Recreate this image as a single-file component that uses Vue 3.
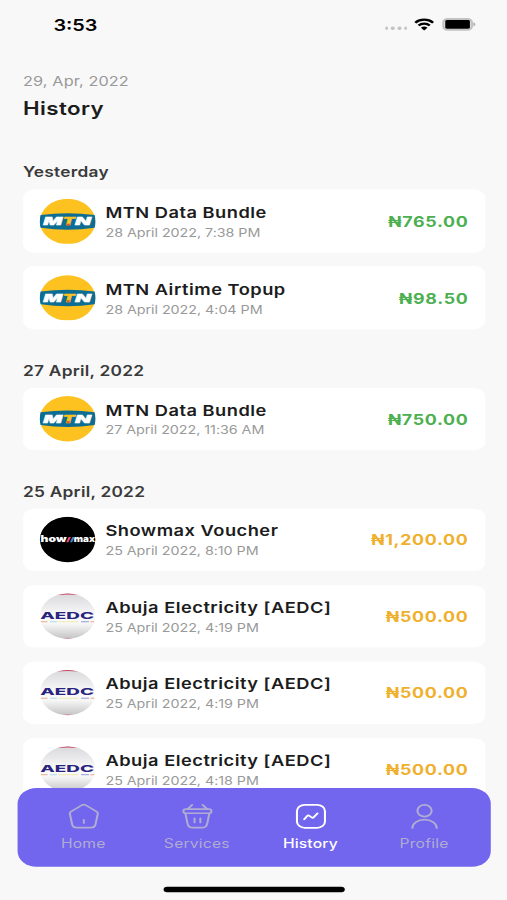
<script setup>
const groups = [
  {
    label: 'Yesterday',
    items: [
      { logo: 'mtn', title: 'MTN Data Bundle', date: '28 April 2022, 7:38 PM', amount: '₦765.00', tone: 'green' },
      { logo: 'mtn', title: 'MTN Airtime Topup', date: '28 April 2022, 4:04 PM', amount: '₦98.50', tone: 'green' },
    ],
  },
  {
    label: '27 April, 2022',
    items: [
      { logo: 'mtn', title: 'MTN Data Bundle', date: '27 April 2022, 11:36 AM', amount: '₦750.00', tone: 'green' },
    ],
  },
  {
    label: '25 April, 2022',
    items: [
      { logo: 'showmax', title: 'Showmax Voucher', date: '25 April 2022, 8:10 PM', amount: '₦1,200.00', tone: 'amber' },
      { logo: 'aedc', title: 'Abuja Electricity [AEDC]', date: '25 April 2022, 4:19 PM', amount: '₦500.00', tone: 'amber' },
      { logo: 'aedc', title: 'Abuja Electricity [AEDC]', date: '25 April 2022, 4:19 PM', amount: '₦500.00', tone: 'amber' },
      { logo: 'aedc', title: 'Abuja Electricity [AEDC]', date: '25 April 2022, 4:18 PM', amount: '₦500.00', tone: 'amber' },
    ],
  },
]
const tabs = ['Home', 'Services', 'History', 'Profile']
const active = 'History'
</script>

<template>
  <div class="viewport">
    <div class="screen">
      <header class="status">
        <span class="time">3:53</span>
        <div class="indicators">
          <span class="dots"><i v-for="n in 4" :key="n"></i></span>
          <svg class="wifi" viewBox="0 0 16 12">
            <path d="M1.2 4.4a9.7 9.7 0 0 1 13.6 0M3.7 7a6.2 6.2 0 0 1 8.6 0" fill="none" stroke="#000" stroke-width="2" />
            <path d="M5.5 9.1a3.6 3.6 0 0 1 5 0L8 11.8z" fill="#000" />
          </svg>
          <svg class="battery" viewBox="0 0 26 12">
            <rect x="1" y="1" width="21.8" height="10" rx="3.2" fill="none" stroke="#c2c2c2" stroke-width="1.9" />
            <rect x="2.4" y="2" width="19" height="8" rx="1.4" fill="#000" />
            <path d="M24 4.1q1.6.5 1.6 1.9T24 7.9z" fill="#b5b5b5" />
          </svg>
        </div>
      </header>

      <div class="heading">
        <p class="today">29, Apr, 2022</p>
        <h1>History</h1>
      </div>

      <main class="list">
        <section v-for="g in groups" :key="g.label" class="group">
          <h2>{{ g.label }}</h2>
          <article v-for="(t, i) in g.items" :key="i" class="card">
            <svg v-if="t.logo === 'mtn'" class="logo" viewBox="0 0 42 42">
              <circle cx="21" cy="21" r="20.7" fill="#fdc220" />
              <path d="M.8 15.2Q21 11.8 41.2 15.2Q42.3 21 41.2 26.8Q21 30.4.8 26.8Q-.3 21 .8 15.2z" fill="#0d6d92" />
              <g class="mtn-text">
                <text x="2.8" y="24.6" textLength="14.2" lengthAdjust="spacingAndGlyphs" fill="#fff">M</text>
                <text x="17.4" y="24.6" textLength="9" lengthAdjust="spacingAndGlyphs" fill="#fdc220" stroke="#fdc220">T</text>
                <text x="26.6" y="24.6" textLength="12" lengthAdjust="spacingAndGlyphs" fill="#fff">N</text>
              </g>
              <path d="M19.8 23.2h3.2l-1.5 2.5z" fill="#d8502c" />
            </svg>
            <svg v-else-if="t.logo === 'showmax'" class="logo round" viewBox="0 0 42 42">
              <circle cx="21" cy="21" r="20.7" fill="#000" />
              <g class="show-text" fill="#fff">
                <text x=".8" y="23.4" textLength="19.4" lengthAdjust="spacingAndGlyphs">how</text>
                <text x="25.6" y="23.4" textLength="15.8" lengthAdjust="spacingAndGlyphs">max</text>
              </g>
              <path d="M19.9 23.4l1.9-4.7h1.7l-1.9 4.7z" fill="#e8467c" />
              <path d="M22.7 23.4l1.9-4.7h1.7l-1.9 4.7z" fill="#4f7fc0" />
            </svg>
            <svg v-else class="logo round" viewBox="0 0 42 42">
              <defs>
                <linearGradient :id="'ball' + i" x1="0" y1="0" x2="0" y2="1">
                  <stop offset="0" stop-color="#d9d9db" />
                  <stop offset=".3" stop-color="#ececee" />
                  <stop offset=".5" stop-color="#fcfcfc" />
                  <stop offset=".68" stop-color="#f6f6f6" />
                  <stop offset="1" stop-color="#c4c4c6" />
                </linearGradient>
              </defs>
              <circle cx="21" cy="21" r="20.7" :fill="'url(#ball' + i + ')'" />
              <path d="M13 1.9Q21-1 29 1.9Q21 1 13 1.9z" fill="#c9415b" />
              <path d="M17 41.2Q21 40.4 25 41.2L21 41.8z" fill="#d68d98" />
              <text class="aedc-text" x=".5" y="23.7" textLength="40.3" lengthAdjust="spacingAndGlyphs" fill="#29257f">AEDC</text>
              <g fill="none" stroke-width=".9" opacity=".7">
                <path d="M1 26.2h5" stroke="#e58d5c" />
                <path d="M8 26.2h5" stroke="#7ed0e0" />
                <path d="M14 26.2h15" stroke="#efe28d" />
                <path d="M31 26.2h6" stroke="#6b71c8" />
                <path d="M38 26.2h3" stroke="#e58d5c" />
              </g>
            </svg>
            <div class="info">
              <strong>{{ t.title }}</strong>
              <small>{{ t.date }}</small>
            </div>
            <span class="amount" :class="t.tone">{{ t.amount }}</span>
          </article>
        </section>
      </main>

      <nav class="tabbar">
        <a v-for="tab in tabs" :key="tab" :class="['tab', { active: tab === active }]">
          <svg class="icon" viewBox="0 0 24 24">
            <template v-if="tab === 'Home'">
              <path d="M10.2 1.7 2.4 7.3a2.8 2.8 0 0 0-1.1 2.9l1.7 9.4a3.6 3.6 0 0 0 3.4 3.1h11.2a3.6 3.6 0 0 0 3.4-3.1l1.7-9.4a2.8 2.8 0 0 0-1.1-2.9l-7.8-5.6a3 3 0 0 0-3.6 0z" />
              <path d="M12 18.3v-3" />
            </template>
            <template v-else-if="tab === 'Services'">
              <path d="M8 1.3 4.6 5M16 1.3l3.4 3.7" />
              <rect x="1.2" y="5.2" width="21.6" height="3.9" rx="1.9" />
              <path d="m2.8 9.4 1.6 9.4c.5 2.6 1.3 3.9 4 3.9h7.2c2.7 0 3.5-1.3 4-3.9l1.6-9.4M9.8 14v3.8M14.3 14v3.8" />
            </template>
            <template v-else-if="tab === 'History'">
              <rect x="1.2" y="1.2" width="21.6" height="21.6" rx="6" />
              <path d="m6.8 14.8 2.3-3.2c.5-.6 1.1-.6 1.7-.1l1.7 1.5c.6.5 1.2.4 1.7-.2l2.9-3.6" />
            </template>
            <template v-else>
              <circle cx="12" cy="6.7" r="5.5" />
              <path d="M2.6 23c0-4.4 4.1-7.8 9.4-7.8s9.4 3.4 9.4 7.8" />
            </template>
          </svg>
          <span>{{ tab }}</span>
        </a>
      </nav>
      <div class="home-indicator"></div>
    </div>
  </div>
</template>

<style>
body {
  background: #f8f8f8;
}
</style>

<style scoped>
.viewport {
  width: 507px;
  height: 900px;
  overflow: hidden;
  background: #f8f8f8;
}
/* 375x812 point canvas stretched to fill the viewport */
.screen {
  position: relative;
  width: 375px;
  height: 812px;
  overflow: hidden;
  box-sizing: border-box;
  transform: scale(1.352, 1.10837);
  transform-origin: 0 0;
  font-family: Inter, 'Liberation Sans', sans-serif;
  color: #1c1c1c;
}
.status {
  display: flex;
  justify-content: space-between;
  align-items: center;
  height: 44px;
  padding: 0 23.2px 0 39.5px;
}
.time {
  padding-top: 1px;
  font-size: 14.7px;
  font-weight: 600;
  color: #000;
}
.indicators {
  display: flex;
  align-items: center;
}
.dots {
  display: flex;
  gap: 2px;
  padding-top: 7px;
  margin-right: 5px;
}
.dots i {
  width: 2.7px;
  height: 3.3px;
  border-radius: 50%;
  background: #c4c4c4;
}
.wifi {
  width: 15.5px;
  height: 12px;
  margin-right: 5px;
}
.battery {
  width: 25px;
  height: 12px;
}
.heading {
  padding: 21.3px 17px 0;
}
.today {
  margin: 0;
  font-size: 12px;
  line-height: 18px;
  letter-spacing: 0.1px;
  color: #999;
}
h1 {
  margin: 4px 0 0;
  font-size: 16.5px;
  line-height: 23px;
  font-weight: 600;
  letter-spacing: 0.3px;
}
.list {
  padding: 32.1px 16px 0 17px;
}
.group {
  margin-bottom: 23.7px;
}
h2 {
  margin: 0;
  height: 29px;
  font-size: 12.8px;
  line-height: 27px;
  font-weight: 600;
  letter-spacing: 0.18px;
  color: #3a3a3a;
}
.card {
  display: flex;
  align-items: center;
  box-sizing: border-box;
  height: 56.5px;
  margin-bottom: 12.5px;
  padding: 0 12.5px 0 11.6px;
  border-radius: 8px;
  background: #fff;
}
.logo {
  flex: none;
  width: 42px;
  height: 41.6px;
}
.round {
  border-radius: 50%;
}
.mtn-text {
  font: italic 900 9.4px Inter, sans-serif;
  stroke: #fff;
  stroke-width: 0.35;
}
.show-text {
  font: 900 8px Inter, sans-serif;
}
.aedc-text {
  font: 800 8.3px Inter, sans-serif;
}
.info {
  display: flex;
  flex-direction: column;
  flex: 1;
  gap: 1px;
  padding-top: 2.8px;
  margin-left: 7.4px;
}
.info strong {
  font-size: 13.5px;
  line-height: 18px;
  font-weight: 600;
  letter-spacing: 0.37px;
}
.info small {
  font-size: 10.6px;
  line-height: 18px;
  letter-spacing: -0.03px;
  color: #999;
}
.amount {
  font-size: 13.2px;
  font-weight: 700;
  letter-spacing: 0.5px;
}
.green {
  color: #4caf50;
}
.amber {
  color: #efb02e;
}
.tabbar {
  position: absolute;
  left: 12.6px;
  top: 711px;
  display: flex;
  box-sizing: border-box;
  width: 350px;
  height: 71px;
  padding: 14.4px 7px 0;
  border-radius: 14px;
  background: #7265ee;
}
.tab {
  display: flex;
  flex: 1;
  flex-direction: column;
  align-items: center;
  gap: 3.4px;
  font-size: 11.6px;
  line-height: 18px;
  letter-spacing: 0.15px;
  color: #b0acd2;
}
.active {
  font-weight: 500;
  letter-spacing: 0.1px;
  color: #fff;
}
.icon {
  width: 24px;
  height: 23px;
  fill: none;
  stroke: currentColor;
  stroke-width: 1.6;
  stroke-linecap: round;
  stroke-linejoin: round;
}
.home-indicator {
  position: absolute;
  left: 121px;
  top: 800px;
  width: 134px;
  height: 5px;
  border-radius: 3px;
  background: #000;
}
</style>
